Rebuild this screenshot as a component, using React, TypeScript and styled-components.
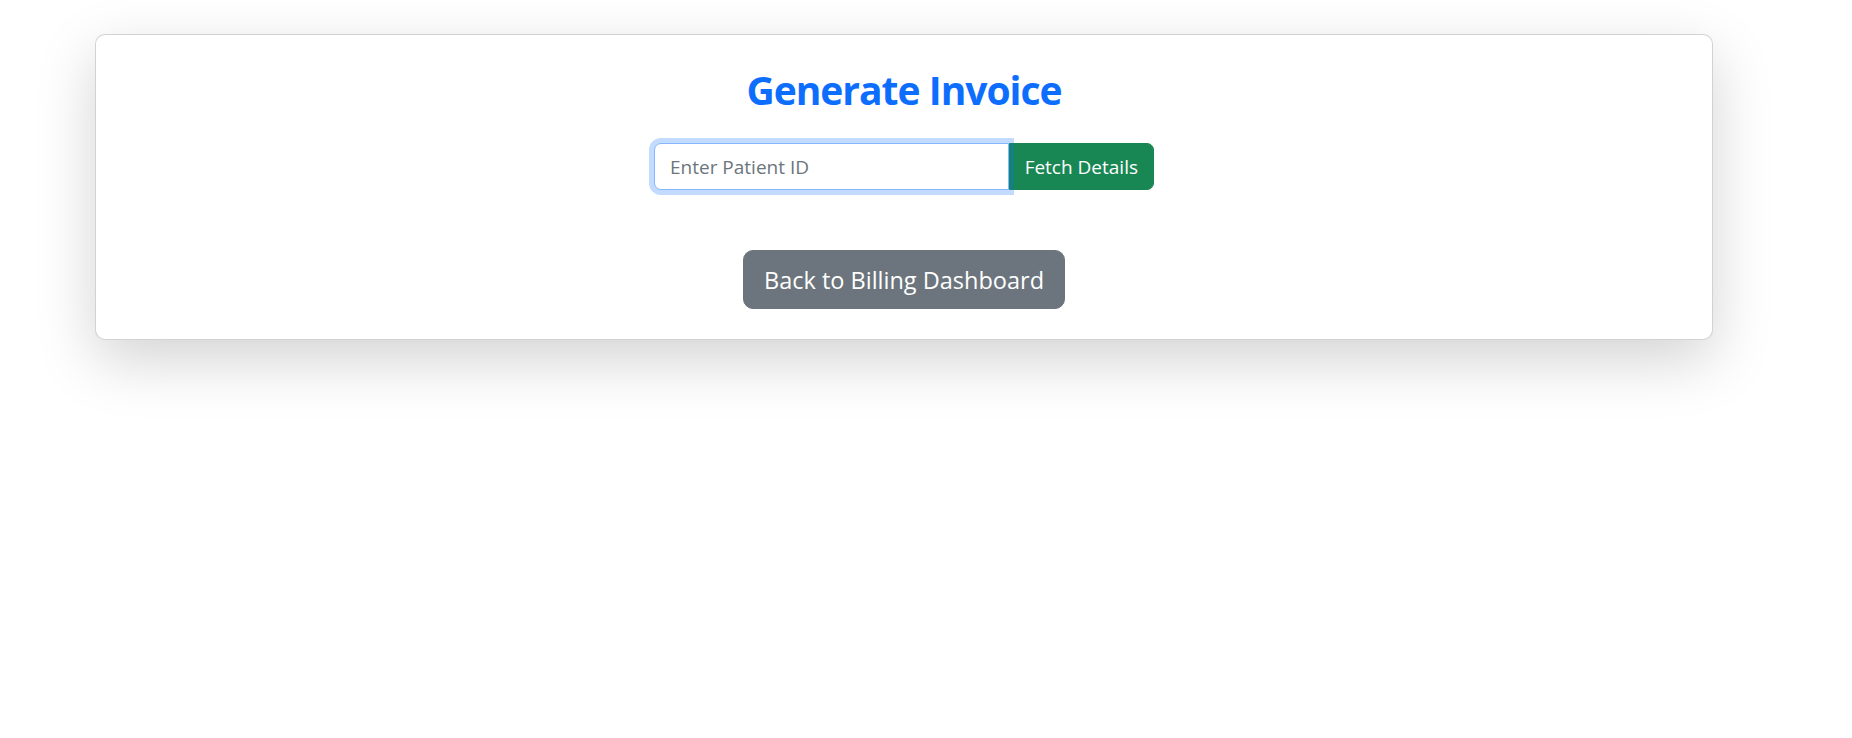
import React from "react"
import styled, { createGlobalStyle } from "styled-components"

const GlobalStyle = createGlobalStyle`
    html, body {
        margin: 0;
        padding: 0;
        background: #ffffff;
        font-family: "Open Sans", "Noto Sans", "Liberation Sans", sans-serif;
        color: #212529;
    }

    * {
        box-sizing: border-box;
    }
`

const Page = styled.div`
    display: flex;
    padding: 34px 139px 0 95px;
    min-height: 738px;
    align-items: flex-start;
`

const Card = styled.div`
    flex: 1;
    display: flex;
    flex-flow: column;
    align-items: center;
    padding: 30px;
    background: #ffffff;
    border: 1px solid rgba(0, 0, 0, 0.175);
    border-radius: 10px;
    box-shadow: 0 20px 60px rgba(0, 0, 0, 0.175);
`

const Title = styled.h2`
    margin: 1px 0 29px;
    font-size: 39px;
    line-height: 48px;
    font-weight: 700;
    letter-spacing: -1px;
    color: #0d6efd;
`

const InputGroup = styled.div`
    display: flex;
    width: 500px;
    height: 47px;
`

const PatientInput = styled.input`
    position: relative;
    z-index: 2;
    flex: 1;
    min-width: 0;
    height: 100%;
    padding: 0 15px;
    font-family: inherit;
    font-size: 19px;
    color: #212529;
    background: #ffffff;
    border: 1px solid #86b7fe;
    border-radius: 7px 0 0 7px;
    outline: none;
    caret-color: #212529;
    box-shadow: 0 0 0 5px rgba(13, 110, 253, 0.25);

    &::placeholder {
        color: #6c757d;
    }
`

const Button = styled.button<{ $variant: "success" | "secondary"; $large?: boolean }>`
    font-family: inherit;
    color: #ffffff;
    border: 1px solid ${p => (p.$variant === "success" ? "#198754" : "#6c757d")};
    background: ${p => (p.$variant === "success" ? "#198754" : "#6c757d")};
    font-size: ${p => (p.$large ? "23.5px" : "19px")};
    padding: ${p => (p.$large ? "0 20px" : "0 15px")};
    height: ${p => (p.$large ? "59px" : "100%")};
    border-radius: ${p => (p.$large ? "10px" : "0 7px 7px 0")};
    cursor: pointer;
    white-space: nowrap;
`

const BackButton = styled(Button)`
    margin-top: 60px;
`

export default function App() {
    return (
        <>
            <GlobalStyle />
            <Page>
                <Card>
                    <Title>Generate Invoice</Title>
                    <InputGroup>
                        <PatientInput type="text" placeholder="Enter Patient ID" autoFocus />
                        <Button $variant="success">Fetch Details</Button>
                    </InputGroup>
                    <BackButton $variant="secondary" $large>
                        Back to Billing Dashboard
                    </BackButton>
                </Card>
            </Page>
        </>
    )
}
